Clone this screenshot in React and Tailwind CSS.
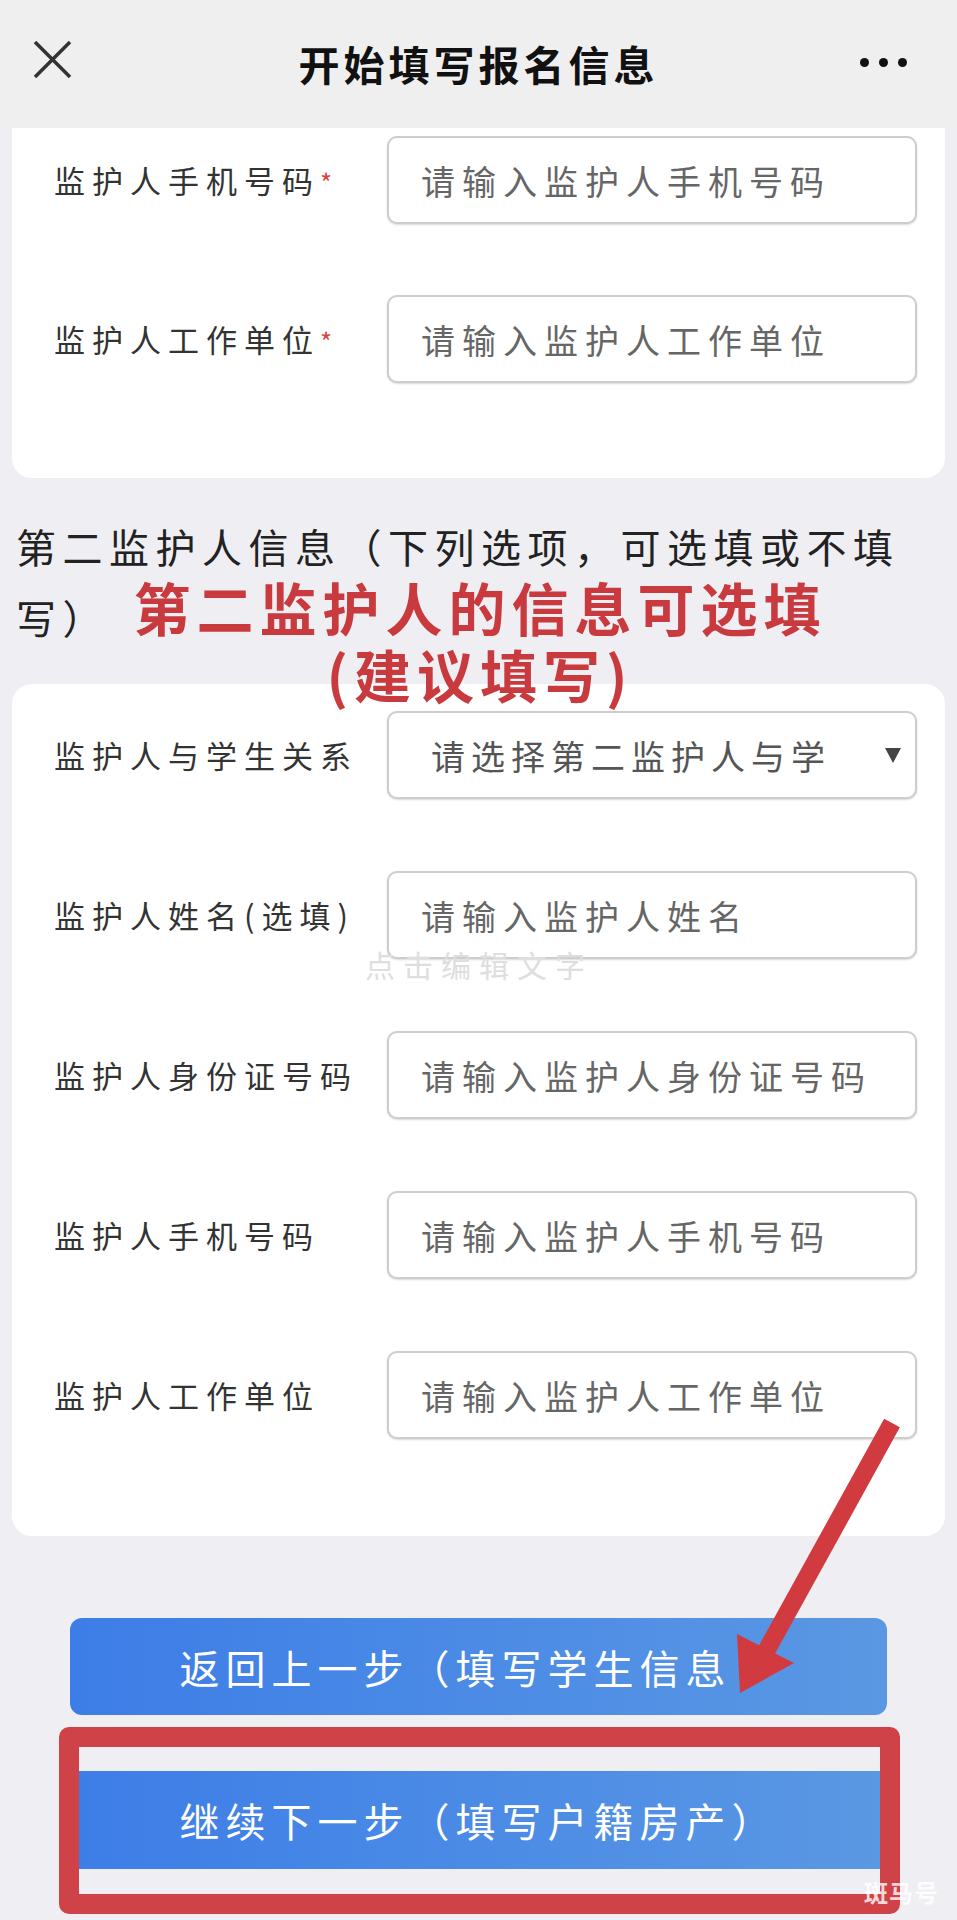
import React from 'react';

const firstRows = [
  { label: '监护人手机号码', required: true, placeholder: '请输入监护人手机号码' },
  { label: '监护人工作单位', required: true, placeholder: '请输入监护人工作单位' },
];

const secondRows = [
  { label: '监护人与学生关系', select: '请选择第二监护人与学生关系' },
  { label: '监护人姓名(选填)', placeholder: '请输入监护人姓名' },
  { label: '监护人身份证号码', placeholder: '请输入监护人身份证号码' },
  { label: '监护人手机号码', placeholder: '请输入监护人手机号码' },
  { label: '监护人工作单位', placeholder: '请输入监护人工作单位' },
];

function FieldRow({ label, required, placeholder, select }) {
  return (
    <div className="flex items-center">
      <div className="w-[333px] flex-none text-[31px] tracking-[7px] text-[#333] whitespace-nowrap">
        {label}
        {required && <span className="text-[#d9463f] text-[26px]">*</span>}
      </div>
      {select ? (
        <div className="w-[530px] h-[88px] flex-none flex items-center rounded-[10px] border-2 border-[#cdcdcd] bg-white shadow-[0_1px_2px_rgba(0,0,0,0.15)] pl-[42px] pr-[14px]">
          <div className="w-[400px] overflow-hidden whitespace-nowrap text-[34px] tracking-[6px] text-[#555]">{select}</div>
          <div className="ml-auto w-0 h-0 border-l-[8px] border-r-[8px] border-t-[15px] border-l-transparent border-r-transparent border-t-[#444]" />
        </div>
      ) : (
        <input
          readOnly
          placeholder={placeholder}
          className="w-[530px] h-[88px] flex-none rounded-[10px] border-2 border-[#cdcdcd] bg-white shadow-[0_1px_2px_rgba(0,0,0,0.15)] pl-[32px] text-[34px] tracking-[7px] outline-none placeholder:text-[#666]"
        />
      )}
    </div>
  );
}

export default function App() {
  return (
    <div className="relative w-[957px] h-[1920px] overflow-hidden bg-[#eeeef3] font-['Noto_Sans_CJK_SC','Noto_Sans',sans-serif]">
      {/* top bar */}
      <div className="h-[128px] bg-[#efefef] grid grid-cols-[140px_1fr_140px] items-center">
        <div className="pl-[33px]">
          <svg width="40" height="40" viewBox="0 0 40 40" className="-mt-[6px]">
            <path d="M2 1 L37 36 M37 1 L2 36" stroke="#333" strokeWidth="3.5" fill="none" />
          </svg>
        </div>
        <div className="text-center text-[41px] font-bold tracking-[4px] text-[#111]">开始填写报名信息</div>
        <div className="flex justify-end gap-[10px] pr-[50px] -mt-[4px]">
          <span className="w-[9px] h-[9px] rounded-full bg-[#111]" />
          <span className="w-[9px] h-[9px] rounded-full bg-[#111]" />
          <span className="w-[9px] h-[9px] rounded-full bg-[#111]" />
        </div>
      </div>

      {/* first guardian, scrolled */}
      <div className="mx-[12px] h-[350px] bg-white rounded-b-[20px] pt-[8px] pl-[42px] flex flex-col gap-[71px]">
        {firstRows.map((r) => (
          <FieldRow key={r.label} {...r} />
        ))}
      </div>

      {/* second guardian heading */}
      <div className="relative pt-[33px] pb-[31px] pl-[16px] text-[40px] leading-[71px] tracking-[6.5px] text-[#222]">
        第二监护人信息（下列选项，可选填或不填
        <br />
        写）
        <div className="absolute z-10 left-[80px] top-[95px] w-[800px] text-center whitespace-nowrap text-[57px] leading-[67px] tracking-[6px] font-bold text-[#c93a3f]">
          第二监护人的信息可选填
          <br />
          (建议填写)
        </div>
      </div>

      <div className="relative mx-[12px] h-[852px] bg-white rounded-[20px] pt-[27px] pl-[42px] flex flex-col gap-[72px]">
        {secondRows.map((r) => (
          <FieldRow key={r.label} {...r} />
        ))}
        <div className="absolute left-[353px] top-[258px] text-[30px] tracking-[8px] text-[#dedede] pointer-events-none">点击编辑文字</div>
      </div>

      {/* actions */}
      <div className="mt-[82px] mx-[70px] h-[97px] rounded-[12px] bg-gradient-to-r from-[#3d7de7] to-[#5a98e3] flex items-center justify-center pr-[46px] text-white text-[40px] tracking-[6px]">
        返回上一步（填写学生信息
      </div>
      <div className="relative mt-[56px] mx-[70px] h-[98px]">
        <div className="h-full bg-gradient-to-r from-[#3d7de7] to-[#5a98e3] flex items-center justify-center text-white text-[40px] tracking-[6px]">
          继续下一步（填写户籍房产）
        </div>
        <div className="absolute -left-[11px] -right-[13px] -top-[44px] -bottom-[45px] border-[20px] border-[#cf4247] rounded-[10px] pointer-events-none" />
      </div>

      {/* red pointer */}
      <svg className="absolute left-0 top-0 pointer-events-none" width="957" height="1920" viewBox="0 0 957 1920">
        <line x1="892" y1="1423" x2="764" y2="1655" stroke="#d13a3f" strokeWidth="18" />
        <polygon points="737,1634 794,1663 740,1693" fill="#d13a3f" />
      </svg>

      <div className="absolute left-[864px] top-[1874px] text-[24px] font-bold text-white/80 tracking-[1px]">斑马号</div>
    </div>
  );
}
